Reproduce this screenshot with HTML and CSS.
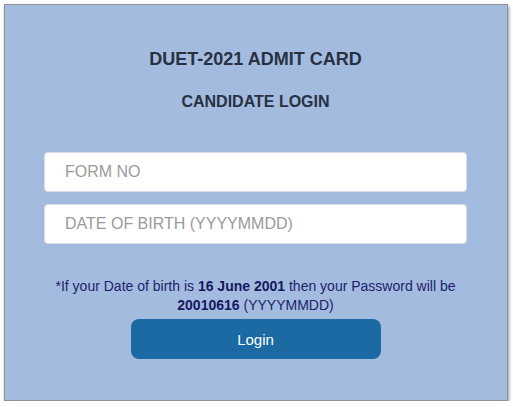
FILE: index.html
```html
<!DOCTYPE html>
<html>
<head>
<meta charset="utf-8">
<link rel="stylesheet" href="styles.css">
</head>
<body>
<div class="card">
  <h1 class="title">DUET-2021 ADMIT CARD</h1>
  <h2 class="subtitle">CANDIDATE LOGIN</h2>
  <form class="form">
    <input class="field" type="text" placeholder="FORM NO">
    <input class="field" type="text" placeholder="DATE OF BIRTH (YYYYMMDD)">
    <p class="note">*If your Date of birth is <b>16 June 2001</b> then your Password will be <b>20010616</b> (YYYYMMDD)</p>
    <button class="btn" type="button">Login</button>
  </form>
</div>
</body>
</html>
```
FILE: styles.css
```css
html, body {
  margin: 0;
  padding: 0;
  background: #ffffff;
}
body {
  padding: 4px 0 0 4px;
  font-family: "Liberation Sans", Arial, sans-serif;
}
.card {
  box-sizing: border-box;
  width: 504px;
  height: 397px;
  background: #a3bbde;
  border: 1px solid #8e9196;
  box-shadow: 1px 2px 3px rgba(60, 60, 60, 0.55);
  padding: 44px 40px 0 39px;
}
.title {
  margin: 0;
  text-align: center;
  font-size: 18px;
  line-height: 20px;
  font-weight: bold;
  color: #273142;
}
.subtitle {
  margin: 23px 0 0;
  text-align: center;
  font-size: 16px;
  line-height: 20px;
  font-weight: bold;
  color: #273142;
}
.form {
  margin: 40px 0 0;
  display: flex;
  flex-direction: column;
  align-items: center;
}
.field {
  box-sizing: border-box;
  width: 423px;
  height: 40px;
  margin: 0 0 12px;
  border: 1px solid #d6dde8;
  border-radius: 4px;
  background: #ffffff;
  padding: 0 20px;
  font-family: "Liberation Sans", Arial, sans-serif;
  font-size: 16px;
  color: #333;
  outline: none;
}
.field::placeholder {
  color: #9a9a9a;
}
.note {
  margin: 21px 0 0;
  text-align: center;
  font-size: 14px;
  line-height: 19px;
  color: #1c1f6b;
}
.note b {
  color: #151860;
}
.btn {
  margin-top: 4px;
  width: 250px;
  height: 40px;
  border: none;
  border-radius: 8px;
  background: #1b6aa4;
  color: #ffffff;
  font-family: "Liberation Sans", Arial, sans-serif;
  font-size: 15px;
}
```
